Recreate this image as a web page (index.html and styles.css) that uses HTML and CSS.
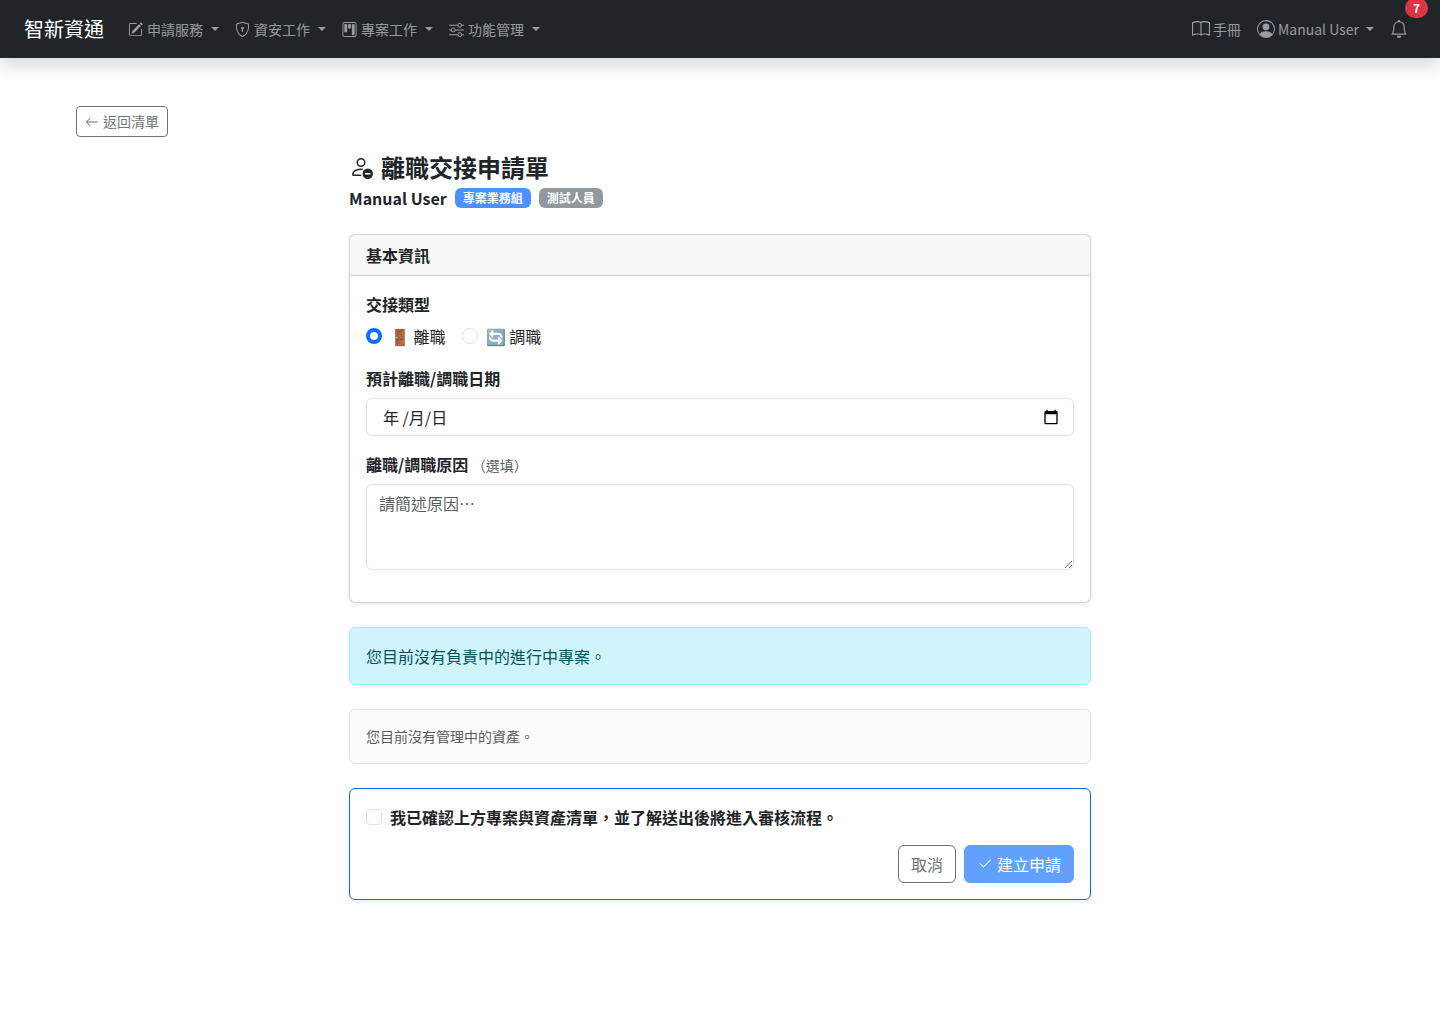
FILE: index.html
```html
<!DOCTYPE html>
<html lang="zh-Hant">
<head>
    <meta charset="UTF-8">
    <meta name="viewport" content="width=device-width, initial-scale=1.0">
    <title>離職交接申請單</title>
    <link rel="stylesheet" href="styles.css">
</head>
<body>
    <nav class="navbar">
        <a class="brand" href="#">智新資通</a>
        <div class="nav-menu">
            <button type="button" class="nav-link dropdown">
                <svg class="icon" viewBox="0 0 16 16"><path d="M15.502 1.94a.5.5 0 0 1 0 .706L14.459 3.69l-2-2L13.502.646a.5.5 0 0 1 .707 0l1.293 1.293zm-1.75 2.456-2-2L4.939 9.21a.5.5 0 0 0-.121.196l-.805 2.414a.25.25 0 0 0 .316.316l2.414-.805a.5.5 0 0 0 .196-.12l6.813-6.814z"/><path d="M1 13.5A1.5 1.5 0 0 0 2.5 15h11a1.5 1.5 0 0 0 1.5-1.5v-6a.5.5 0 0 0-1 0v6a.5.5 0 0 1-.5.5h-11a.5.5 0 0 1-.5-.5v-11a.5.5 0 0 1 .5-.5H9a.5.5 0 0 0 0-1H2.5A1.5 1.5 0 0 0 1 2.5z"/></svg>
                <span>申請服務</span>
            </button>
            <button type="button" class="nav-link dropdown">
                <svg class="icon" viewBox="0 0 16 16"><path d="M5.338 1.59a61 61 0 0 0-2.837.856.48.48 0 0 0-.328.39c-.554 4.157.726 7.19 2.253 9.188a10.7 10.7 0 0 0 2.287 2.233c.346.244.652.42.893.533q.18.085.293.118a1 1 0 0 0 .101.025 1 1 0 0 0 .1-.025q.114-.034.294-.118c.24-.113.547-.29.893-.533a10.7 10.7 0 0 0 2.287-2.233c1.527-1.997 2.807-5.031 2.253-9.188a.48.48 0 0 0-.328-.39c-.651-.213-1.75-.56-2.837-.855C9.552 1.29 8.531 1.067 8 1.067c-.53 0-1.552.223-2.662.524zM5.072.56C6.157.265 7.31 0 8 0s1.843.265 2.928.56c1.11.3 2.229.655 2.887.87a1.54 1.54 0 0 1 1.044 1.262c.596 4.477-.787 7.795-2.465 9.99a11.8 11.8 0 0 1-2.517 2.453 7 7 0 0 1-1.048.625c-.28.132-.581.24-.829.24s-.548-.108-.829-.24a7 7 0 0 1-1.048-.625 11.8 11.8 0 0 1-2.517-2.453C1.928 10.487.545 7.169 1.141 2.692A1.54 1.54 0 0 1 2.185 1.43 63 63 0 0 1 5.072.56"/><path d="M9.5 6.5a1.5 1.5 0 0 1-1 1.415l.385 1.99a.5.5 0 0 1-.491.595h-.788a.5.5 0 0 1-.49-.595l.384-1.99a1.5 1.5 0 1 1 2-1.415"/></svg>
                <span>資安工作</span>
            </button>
            <button type="button" class="nav-link dropdown">
                <svg class="icon" viewBox="0 0 16 16"><path d="M13.5 1a1 1 0 0 1 1 1v12a1 1 0 0 1-1 1h-11a1 1 0 0 1-1-1V2a1 1 0 0 1 1-1zm-11-1a2 2 0 0 0-2 2v12a2 2 0 0 0 2 2h11a2 2 0 0 0 2-2V2a2 2 0 0 0-2-2z"/><path d="M6.5 3a1 1 0 0 1 1-1h1a1 1 0 0 1 1 1v3a1 1 0 0 1-1 1h-1a1 1 0 0 1-1-1zm-4 0a1 1 0 0 1 1-1h1a1 1 0 0 1 1 1v7a1 1 0 0 1-1 1h-1a1 1 0 0 1-1-1zm8 0a1 1 0 0 1 1-1h1a1 1 0 0 1 1 1v10a1 1 0 0 1-1 1h-1a1 1 0 0 1-1-1z"/></svg>
                <span>專案工作</span>
            </button>
            <button type="button" class="nav-link dropdown">
                <svg class="icon" viewBox="0 0 16 16"><path fill-rule="evenodd" d="M11.5 2a1.5 1.5 0 1 0 0 3 1.5 1.5 0 0 0 0-3M9.05 3a2.5 2.5 0 0 1 4.9 0H16v1h-2.05a2.5 2.5 0 0 1-4.9 0H0V3zM4.5 7a1.5 1.5 0 1 0 0 3 1.5 1.5 0 0 0 0-3M2.05 8a2.5 2.5 0 0 1 4.9 0H16v1H6.95a2.5 2.5 0 0 1-4.9 0H0V8zm9.45 4a1.5 1.5 0 1 0 0 3 1.5 1.5 0 0 0 0-3m-2.45 1a2.5 2.5 0 0 1 4.9 0H16v1h-2.05a2.5 2.5 0 0 1-4.9 0H0v-1z"/></svg>
                <span>功能管理</span>
            </button>
        </div>
        <div class="nav-user">
            <a class="nav-link" href="#">
                <svg class="icon icon-md" viewBox="0 0 16 16"><path d="M1 2.828c.885-.37 2.154-.769 3.388-.893 1.33-.134 2.458.063 3.112.752v9.746c-.935-.53-2.12-.603-3.213-.493-1.18.12-2.37.461-3.287.811zm7.5-.141c.654-.689 1.782-.886 3.112-.752 1.234.124 2.503.523 3.388.893v9.923c-.918-.35-2.107-.692-3.287-.81-1.094-.111-2.278-.039-3.213.492zM8 1.783C7.015.936 5.587.81 4.287.94c-1.514.153-3.042.672-3.994 1.105A.5.5 0 0 0 0 2.5v11a.5.5 0 0 0 .707.455c.882-.4 2.303-.881 3.68-1.02 1.409-.142 2.59.087 3.223.877a.5.5 0 0 0 .78 0c.633-.79 1.814-1.019 3.222-.877 1.378.139 2.8.62 3.681 1.02A.5.5 0 0 0 16 13.5v-11a.5.5 0 0 0-.293-.455c-.952-.433-2.48-.952-3.994-1.105C10.413.809 8.985.936 8 1.783"/></svg>
                <span>手冊</span>
            </a>
            <button type="button" class="nav-link dropdown">
                <svg class="icon icon-md" viewBox="0 0 16 16"><path d="M11 6a3 3 0 1 1-6 0 3 3 0 0 1 6 0"/><path fill-rule="evenodd" d="M0 8a8 8 0 1 1 16 0A8 8 0 0 1 0 8m8-7a7 7 0 0 0-5.468 11.37C3.242 11.226 4.805 10 8 10s4.757 1.225 5.468 2.37A7 7 0 0 0 8 1"/></svg>
                <span>Manual User</span>
            </button>
            <button type="button" class="nav-link bell" aria-label="通知">
                <svg class="icon icon-md" viewBox="0 0 16 16"><path d="M8 16a2 2 0 0 0 2-2H6a2 2 0 0 0 2 2M8 1.918l-.797.161A4 4 0 0 0 4 6c0 .628-.134 2.197-.459 3.742-.16.767-.376 1.566-.663 2.258h10.244c-.287-.692-.502-1.49-.663-2.258C12.134 8.197 12 6.628 12 6a4 4 0 0 0-3.203-3.92zM14.22 12c.223.447.481.801.78 1H1c.299-.199.557-.553.78-1C2.68 10.2 3 6.88 3 6c0-2.42 1.72-4.44 4.005-4.901a1 1 0 1 1 1.99 0A5 5 0 0 1 13 6c0 .88.32 4.2 1.22 6"/></svg>
                <span class="bell-count">7</span>
            </button>
        </div>
    </nav>

    <main class="container">
        <a class="btn btn-outline btn-sm" href="#">
            <svg class="icon icon-sm" viewBox="0 0 16 16"><path fill-rule="evenodd" d="M15 8a.5.5 0 0 0-.5-.5H2.707l3.147-3.146a.5.5 0 1 0-.708-.708l-4 4a.5.5 0 0 0 0 .708l4 4a.5.5 0 0 0 .708-.708L2.707 8.5H14.5A.5.5 0 0 0 15 8"/></svg>
            <span>返回清單</span>
        </a>

        <form class="handover">
            <header class="page-head">
                <h1>
                    <svg class="icon icon-lg" viewBox="0 0 16 16"><path d="M12.5 16a3.5 3.5 0 1 0 0-7 3.5 3.5 0 0 0 0 7M11 12h3a.5.5 0 0 1 0 1h-3a.5.5 0 0 1 0-1m0-7a3 3 0 1 1-6 0 3 3 0 0 1 6 0M8 7a2 2 0 1 0 0-4 2 2 0 0 0 0 4"/><path d="M8.256 14a4.5 4.5 0 0 1-.229-1.004H3c.001-.246.154-.986.832-1.664C4.484 10.68 5.711 10 8 10q.39 0 .74.025c.226-.341.496-.65.804-.918Q8.844 9.002 8 9c-5 0-6 3-6 4s1 1 1 1z"/></svg>
                    <span>離職交接申請單</span>
                </h1>
                <div class="applicant">
                    <strong>Manual User</strong>
                    <span class="badge badge-primary">專案業務組</span>
                    <span class="badge badge-secondary">測試人員</span>
                </div>
            </header>

            <section class="card">
                <h2 class="card-header">基本資訊</h2>
                <div class="card-body">
                    <fieldset class="field">
                        <legend class="form-label">交接類型</legend>
                        <div class="radio-row">
                            <label class="check"><input type="radio" name="type" checked><span>🚪 離職</span></label>
                            <label class="check"><input type="radio" name="type"><span>🔄 調職</span></label>
                        </div>
                    </fieldset>
                    <div class="field">
                        <label class="form-label" for="leaveDate">預計離職/調職日期</label>
                        <div class="form-control date-box">
                            <input id="leaveDate" type="text" placeholder="年 /月/日">
                            <button type="button" aria-label="選擇日期">
                                <svg class="icon icon-check" viewBox="0 0 24 24"><path d="M20 3h-1V1h-2v2H7V1H5v2H4c-1.100 0-2 .9-2 2v16c0 1.100.9 2 2 2h16c1.100 0 2-.9 2-2V5c0-1.100-.9-2-2-2zm0 18H4V8h16z"/></svg>
                            </button>
                        </div>
                    </div>
                    <div class="field">
                        <label class="form-label" for="reason">離職/調職原因 <small>（選填）</small></label>
                        <textarea id="reason" class="form-control" rows="3" placeholder="請簡述原因…"></textarea>
                    </div>
                </div>
            </section>

            <div class="alert alert-info">您目前沒有負責中的進行中專案。</div>
            <div class="alert alert-light">您目前沒有管理中的資產。</div>

            <section class="card card-confirm">
                <label class="check"><input id="confirmBox" type="checkbox"><strong>我已確認上方專案與資產清單，並了解送出後將進入審核流程。</strong></label>
                <div class="actions">
                    <a class="btn btn-outline" href="#">取消</a>
                    <button id="submitBtn" type="submit" class="btn btn-primary" disabled>
                        <svg class="icon icon-check" viewBox="0 0 16 16"><path d="M13.854 3.646a.5.5 0 0 1 0 .708l-7 7a.5.5 0 0 1-.708 0l-3.5-3.5a.5.5 0 1 1 .708-.708L6.5 10.293l6.646-6.647a.5.5 0 0 1 .708 0"/></svg>
                        <span>建立申請</span>
                    </button>
                </div>
            </section>
        </form>
    </main>

    <script>
        let confirmBox = document.getElementById("confirmBox");
        let submitBtn = document.getElementById("submitBtn");

        confirmBox.addEventListener("change", function () {
            submitBtn.disabled = !confirmBox.checked;
        });
    </script>
</body>
</html>
```

FILE: styles.css
```css
* {
    box-sizing: border-box;
}

body {
    margin: 0;
    font-family: "Noto Sans CJK TC", "Noto Sans", sans-serif;
    font-size: 16px;
    line-height: 24px;
    color: #212529;
    background-color: #fff;
}

h1,
h2 {
    margin: 0;
}

a {
    text-decoration: none;
}

button,
input,
textarea {
    font: inherit;
}

.icon {
    width: 15px;
    height: 15px;
    fill: currentColor;
    flex-shrink: 0;
}

.icon-sm {
    width: 14px;
    height: 14px;
}

.icon-check {
    width: 16px;
    height: 16px;
}

.icon-md {
    width: 18px;
    height: 18px;
}

.icon-lg {
    width: 24px;
    height: 24px;
}

/* Navbar */
.navbar {
    display: flex;
    align-items: center;
    min-height: 58px;
    padding: 0 24px;
    background-color: #212529;
    box-shadow: 0 8px 16px rgba(0, 0, 0, 0.15);
}

.brand {
    margin-right: 16px;
    font-size: 20px;
    line-height: 30px;
    color: #fff;
}

.nav-menu,
.nav-user {
    display: flex;
    align-items: center;
}

.nav-user {
    margin-left: auto;
}

.nav-link {
    display: flex;
    align-items: center;
    gap: 4px;
    padding: 8px;
    border: none;
    background: none;
    font-size: 14px;
    color: rgba(255, 255, 255, 0.55);
    cursor: pointer;
}

.nav-user .nav-link {
    gap: 3px;
}

.nav-link:hover {
    color: rgba(255, 255, 255, 0.75);
}

.dropdown::after {
    content: "";
    margin-left: 4px;
    border-top: 4px solid;
    border-left: 4px solid transparent;
    border-right: 4px solid transparent;
}

.bell {
    position: relative;
}

.bell-count {
    position: absolute;
    top: -14px;
    right: -12px;
    padding: 4px 8px;
    border-radius: 20px;
    background-color: #dc3545;
    font-size: 12px;
    line-height: 12px;
    font-weight: bold;
    color: #fff;
}

/* Page */
.container {
    max-width: 1320px;
    margin: 0 auto;
    padding: 48px 16px;
}

.handover {
    display: flex;
    flex-direction: column;
    gap: 24px;
    max-width: 742px;
    margin: 16px auto 0;
}

.page-head h1 {
    display: flex;
    align-items: center;
    gap: 8px;
    font-size: 24px;
    line-height: 28px;
}

.applicant {
    display: flex;
    align-items: center;
    gap: 8px;
    margin-top: 5px;
}

.badge {
    padding: 4px 8px;
    border-radius: 6px;
    font-size: 12px;
    line-height: 12px;
    font-weight: bold;
    color: #fff;
}

.badge-primary {
    background-color: #4a92fe;
}

.badge-secondary {
    background-color: #91989e;
}

/* Cards */
.card {
    border: 1px solid rgba(0, 0, 0, 0.175);
    border-radius: 6px;
    background-color: #fff;
    box-shadow: 0 2px 4px rgba(0, 0, 0, 0.075);
}

.card-header {
    padding: 8px 16px;
    border-bottom: 1px solid rgba(0, 0, 0, 0.175);
    border-radius: 5px 5px 0 0;
    background-color: rgba(33, 37, 41, 0.03);
    font-size: 16px;
}

.card-body {
    padding: 16px;
}

.card-confirm {
    padding: 16px;
    border-color: #0d6efd;
}

/* Form fields */
.field {
    min-width: 0;
    margin: 0 0 16px;
    padding: 0;
    border: none;
}

.form-label {
    display: block;
    margin-bottom: 8px;
    padding: 0;
    font-weight: bold;
}

.form-label small {
    font-size: 14px;
    line-height: 14px;
    font-weight: normal;
    color: rgba(33, 37, 41, 0.75);
}

.radio-row {
    display: flex;
    gap: 16px;
    min-height: 26px;
}

.check {
    display: flex;
    gap: 8px;
}

.check input {
    appearance: none;
    width: 16px;
    height: 16px;
    margin: 4px 0;
    flex-shrink: 0;
    border: 1px solid #dee2e6;
    background-color: #fff;
}

.check input[type="radio"] {
    border-radius: 50%;
}

.check input[type="radio"]:checked {
    border: 4px solid #0d6efd;
}

.check input[type="checkbox"] {
    border-radius: 4px;
}

.check input[type="checkbox"]:checked {
    border-color: #0d6efd;
    background-color: #0d6efd;
}

.form-control {
    display: block;
    width: 100%;
    padding: 6px 12px;
    border: 1px solid #dee2e6;
    border-radius: 6px;
    background-color: #fff;
    color: #212529;
}

.date-box {
    display: flex;
    align-items: center;
    padding: 6px 14px 6px 16px;
}

.date-box input {
    flex: 1;
    min-width: 0;
    height: 24px;
    padding: 0;
    border: none;
    outline: none;
    color: #212529;
}

.date-box input::placeholder {
    color: #212529;
}

.date-box button {
    display: flex;
    padding: 0;
    border: none;
    background: none;
    color: #000;
    cursor: pointer;
}

textarea.form-control {
    resize: vertical;
}

.form-control::placeholder {
    color: rgba(33, 37, 41, 0.75);
}

/* Alerts */
.alert {
    padding: 16px;
    border: 1px solid;
    border-radius: 6px;
}

.alert-info {
    border-color: #9eeaf9;
    background-color: #cff4fc;
    color: #055160;
}

.alert-light {
    border-color: #dee2e6;
    background-color: #fcfcfd;
    font-size: 14px;
    line-height: 21px;
    color: #585b5e;
}

/* Buttons */
.btn {
    display: inline-flex;
    align-items: center;
    gap: 4px;
    padding: 6px 12px;
    border: 1px solid transparent;
    border-radius: 6px;
    cursor: pointer;
}

.btn-sm {
    padding: 4px 8px;
    border-radius: 4px;
    font-size: 14px;
    line-height: 21px;
}

.btn-outline {
    border-color: #6c757d;
    color: #6c757d;
}

.btn-outline:hover {
    background-color: #6c757d;
    color: #fff;
}

.btn-primary {
    border-color: #0d6efd;
    background-color: #0d6efd;
    color: #fff;
}

.btn-primary:disabled {
    opacity: 0.65;
    cursor: default;
}

.actions {
    display: flex;
    justify-content: flex-end;
    gap: 8px;
    margin-top: 16px;
}
```
